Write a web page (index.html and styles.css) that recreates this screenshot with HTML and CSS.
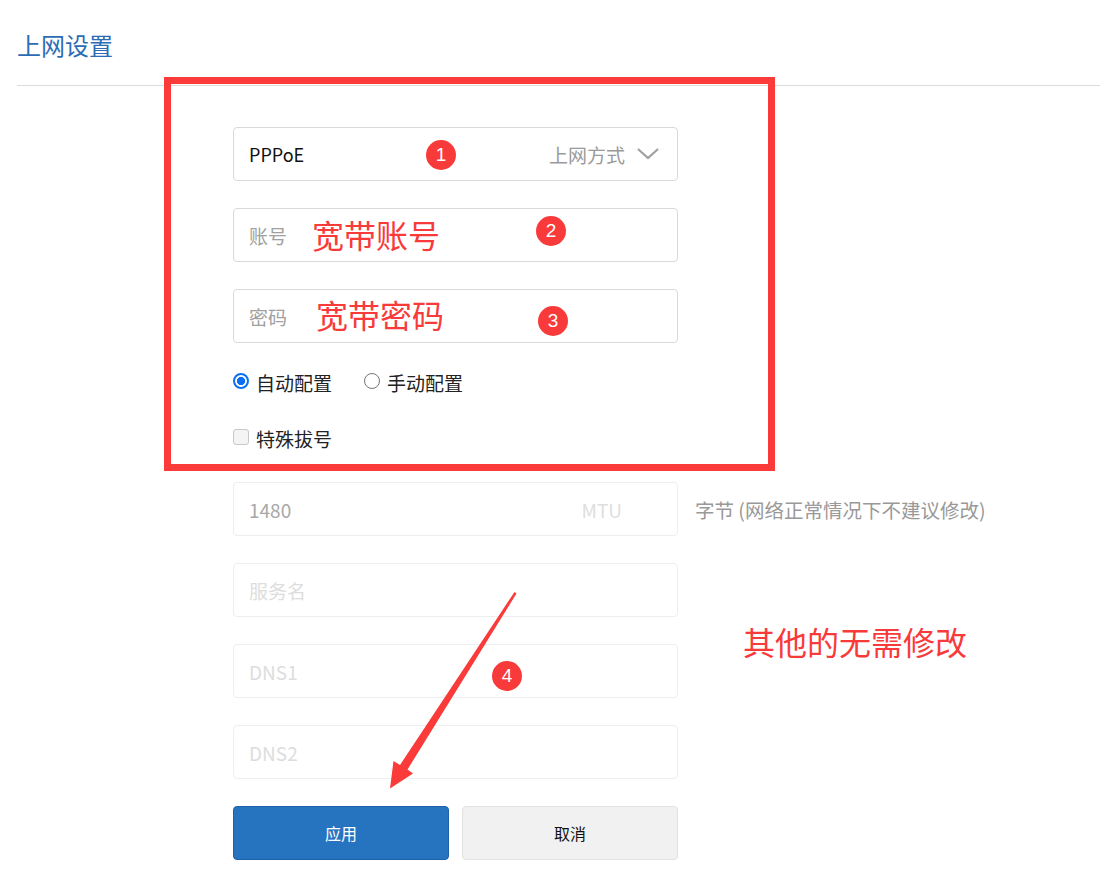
FILE: index.html
```html
<!DOCTYPE html>
<html lang="zh-CN">
<head>
<meta charset="utf-8">
<title>上网设置</title>
<link rel="stylesheet" href="styles.css">
</head>
<body>
<div class="page">
  <h1 class="title">上网设置</h1>
  <div class="rule"></div>

  <div class="form">
    <div class="field select">
      <span class="value">PPPoE</span>
      <span class="badge b1">1</span>
      <span class="label-right">上网方式</span>
      <svg class="chev" width="22" height="12" viewBox="0 0 22 12"><path d="M1 1 L11 10 L21 1" fill="none" stroke="#a0a0a0" stroke-width="2.2"/></svg>
    </div>

    <div class="field">
      <span class="ph">账号</span>
      <span class="note-in n2">宽带账号</span>
      <span class="badge b2">2</span>
    </div>

    <div class="field">
      <span class="ph">密码</span>
      <span class="note-in n3">宽带密码</span>
      <span class="badge b3">3</span>
    </div>

    <div class="radios">
      <label class="opt"><span class="radio on"></span>自动配置</label>
      <label class="opt"><span class="radio"></span>手动配置</label>
    </div>

    <div class="check">
      <span class="box"></span>特殊拔号
    </div>

    <div class="row">
      <div class="field dis mtu">
        <span class="val-dis">1480</span>
        <span class="unit">MTU</span>
      </div>
      <span class="side">字节 (网络正常情况下不建议修改)</span>
    </div>

    <div class="field dis"><span class="ph-dis">服务名</span></div>
    <div class="field dis"><span class="ph-dis">DNS1</span><span class="badge b4">4</span></div>
    <div class="field dis"><span class="ph-dis">DNS2</span></div>

    <div class="buttons">
      <button class="btn primary">应用</button>
      <button class="btn">取消</button>
    </div>
  </div>

  <div class="redbox"></div>
  <div class="remark">其他的无需修改</div>
  <svg class="arrow" width="1100" height="889" viewBox="0 0 1100 889">
    <polygon points="514.5,592 516.5,593.5 407.5,769.5 413,773.5 390,788.5 393.5,761 400,765" fill="#fb3a3a"/>
  </svg>
</div>
</body>
</html>
```

FILE: styles.css
```css
* { box-sizing: border-box; }
html, body { margin: 0; padding: 0; background: #fff; }
body {
  font-family: "Noto Sans CJK SC", "Noto Sans", sans-serif;
  color: #333;
}
.page {
  position: relative;
  width: 1100px;
  height: 889px;
  overflow: hidden;
}
.title {
  margin: 0;
  padding: 33px 0 0 17px;
  font-size: 24px;
  line-height: 24px;
  font-weight: normal;
  color: #2b6cb5;
}
.rule {
  margin: 28px 0 0 17px;
  height: 1px;
  background: #dcdcdc;
}
.form {
  margin: 41px 0 0 233px;
  width: 800px;
}
.field {
  position: relative;
  width: 445px;
  height: 54px;
  border: 1px solid #d9d9d9;
  border-radius: 4px;
  display: flex;
  align-items: center;
  padding: 0 15px;
  margin-bottom: 27px;
  font-size: 19px;
}
.field.dis { border-color: #eeeeee; }
.select .value { color: #111; font-size: 18px; }
.select .label-right {
  margin-left: auto;
  color: #9a9a9a;
  font-size: 19px;
}
.chev { margin-left: 12px; margin-right: 3px; margin-top: 0; }
.ph { color: #a0a0a0; font-size: 19px; }
.note-in {
  color: #f83a3a;
  font-size: 32px;
  line-height: 40px;
}
.n2 { margin-left: 25px; margin-top: -2px; }
.n3 { margin-left: 29px; margin-top: -4px; }
.badge {
  position: absolute;
  width: 30px;
  height: 30px;
  border-radius: 50%;
  background: #f83a3a;
  color: #fff;
  font-family: "Liberation Sans", "Noto Sans", sans-serif;
  font-size: 19px;
  line-height: 30px;
  text-align: center;
}
.b1 { left: 192px; top: 12px; }
.b2 { left: 302px; top: 7px; }
.b3 { left: 304px; top: 16px; }
.b4 { left: 258px; top: 16px; }
.radios {
  display: flex;
  align-items: center;
  height: 24px;
  margin-top: 2px;
  font-size: 19px;
  color: #222;
}
.opt { display: flex; align-items: center; }
.opt + .opt { margin-left: 32px; }
.radio {
  width: 16px;
  height: 16px;
  border-radius: 50%;
  border: 1px solid #767676;
  margin-right: 7px;
  margin-top: -3px;
  background: #fff;
}
.radio.on {
  border: 2px solid #0b6ff5;
  background: radial-gradient(circle, #0b6ff5 0 3.8px, #fff 4.4px);
}
.check {
  display: flex;
  align-items: center;
  height: 24px;
  margin-top: 32px;
  font-size: 19px;
  color: #222;
}
.box {
  width: 16px;
  height: 16px;
  border: 1px solid #c8c8c8;
  border-radius: 3px;
  background: #f4f4f4;
  margin-right: 7px;
  margin-top: -2px;
}
.row {
  display: flex;
  align-items: center;
  margin-top: 32px;
  margin-bottom: 27px;
}
.row .field { margin-bottom: 0; }
.val-dis { color: #a8a8a8; font-size: 19px; }
.unit { margin-left: auto; margin-right: 40px; color: #dedede; font-size: 19px; }
.side { margin-left: 17px; color: #999; font-size: 19.5px; }
.ph-dis { color: #dddddd; font-size: 19px; }
.buttons { display: flex; gap: 13px; }
.btn {
  width: 216px;
  height: 54px;
  border-radius: 4px;
  border: 1px solid #e2e2e2;
  background: #f1f1f1;
  color: #111;
  font-family: "Noto Sans CJK SC", sans-serif;
  font-size: 16px;
}
.btn.primary {
  background: #2673bf;
  border-color: #1d62a8;
  color: #fff;
}
.redbox {
  position: absolute;
  left: 164px;
  top: 77px;
  width: 611px;
  height: 394px;
  border: 7px solid #fb3a3a;
}
.remark {
  position: absolute;
  left: 743px;
  top: 620px;
  font-size: 32px;
  line-height: 42px;
  color: #f83a3a;
}
.arrow { position: absolute; left: 0; top: 0; pointer-events: none; }
```
